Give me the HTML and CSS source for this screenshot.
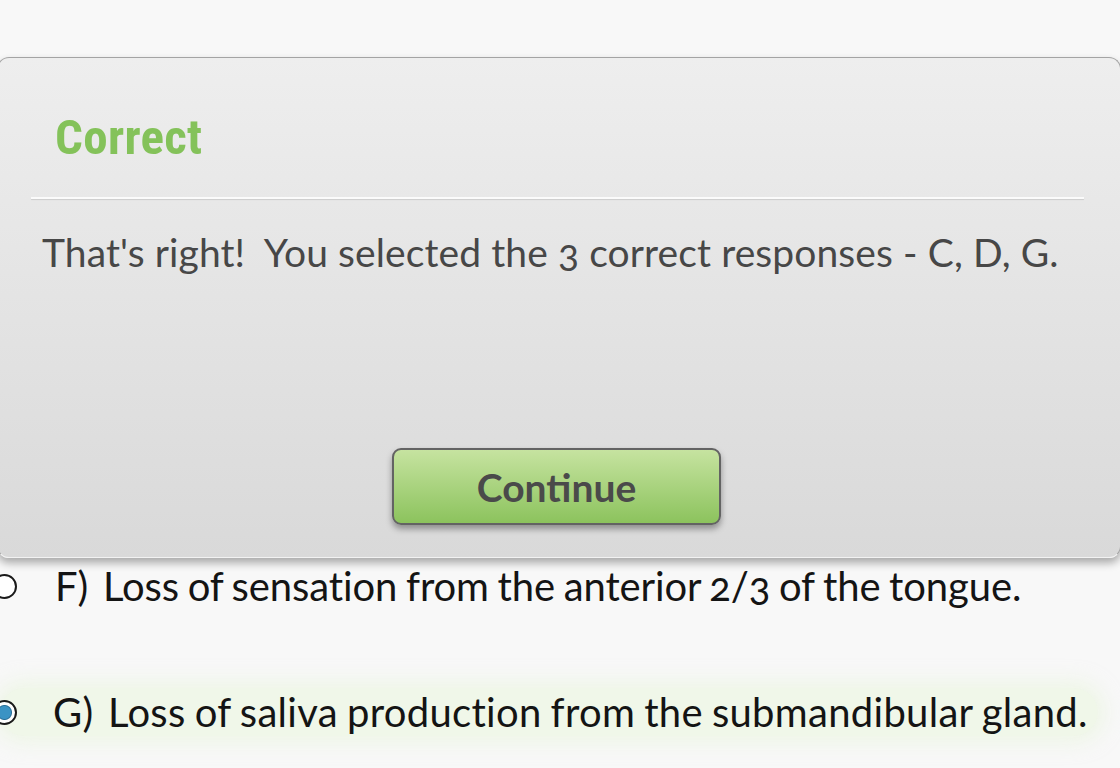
FILE: index.html
```html
<!DOCTYPE html>
<html>
<head>
<meta charset="utf-8">
<link rel="stylesheet" href="styles.css">
</head>
<body>
<div class="page">
  <div class="options">
    <div class="option">
      <span class="radio"></span>
      <span class="letter">F)</span>
      <span class="label">Loss of sensation from the anterior 2/3 of the tongue.</span>
    </div>
    <div class="option selected">
      <span class="radio checked"></span>
      <span class="letter">G)</span>
      <span class="label">Loss of saliva production from the submandibular gland.</span>
    </div>
  </div>

  <div class="dialog">
    <h1 class="title">Correct</h1>
    <div class="rule"></div>
    <p class="message">That's right!&nbsp; You selected the 3 correct responses - C, D, G.</p>
    <div class="actions">
      <button class="btn">Continue</button>
    </div>
  </div>
</div>
</body>
</html>
```

FILE: styles.css
```css
html, body {
  margin: 0;
  padding: 0;
}
body {
  width: 1120px;
  height: 768px;
  overflow: hidden;
  background: #f8f8f8;
  font-family: Lato, "Open Sans", sans-serif;
}
.page {
  position: relative;
  width: 1120px;
  height: 768px;
}

/* options list underneath */
.options {
  padding-top: 562px;
  display: flex;
  flex-direction: column;
  gap: 78px;
}
.option {
  display: flex;
  align-items: center;
  height: 48px;
  color: #141414;
  font-size: 40px;
  letter-spacing: -0.1px;
  word-spacing: -1.5px;
  font-variant-numeric: oldstyle-nums;
}
.option.selected {
  letter-spacing: 0.3px;
  background: rgba(232, 246, 218, 0.5);
  box-shadow: 0 0 18px 8px rgba(232, 246, 218, 0.5);
  border-radius: 24px;
  margin-right: 22px;
}
.radio {
  box-sizing: border-box;
  width: 25px;
  height: 25px;
  margin-left: -8px;
  border-radius: 50%;
  border: 2px solid #1a1a1a;
  background: #fff;
  flex: none;
}
.radio.checked {
  background: radial-gradient(circle, #3b93c4 0 6px, #2a6f98 7px, #ffffff 8px);
}
.letter {
  margin-left: 38px;
  width: 48px;
}
.option.selected .letter {
  margin-left: 36px;
  width: 55px;
}

/* dialog */
.dialog {
  position: absolute;
  left: -3px;
  top: 57px;
  width: 1124px;
  height: 501px;
  box-sizing: border-box;
  border: 1px solid #a4a4a4;
  border-bottom-color: #f2f2f2;
  border-radius: 12px;
  background: linear-gradient(#eeeeee, #d9d9d9);
  box-shadow: 0 5px 8px rgba(0, 0, 0, 0.32);
  padding: 0 36px 0 33px;
  display: flex;
  flex-direction: column;
}
.title {
  margin: 55px 0 0 24px;
  font-family: "Liberation Sans Narrow", "Roboto Condensed", Roboto, sans-serif;
  font-weight: bold;
  font-size: 49px;
  line-height: 49px;
  letter-spacing: 0.3px;
  color: #84c25a;
}
.rule {
  margin-top: 35px;
  height: 0;
  border-top: 2px solid #fbfbfb;
  box-shadow: 0 1px 1px rgba(0, 0, 0, 0.12);
}
.message {
  margin: 29px 0 0 11px;
  font-size: 39px;
  line-height: 48px;
  color: #474747;
  letter-spacing: 0.1px;
  font-variant-numeric: oldstyle-nums;
}
.actions {
  margin-top: auto;
  margin-bottom: 32px;
  display: flex;
  justify-content: center;
}
.btn {
  width: 329px;
  height: 77px;
  box-sizing: border-box;
  border: 2px solid #636363;
  border-radius: 9px;
  background: linear-gradient(#c6e3a0, #8cc35d);
  box-shadow: 0 4px 6px rgba(0, 0, 0, 0.35);
  font-family: Lato, "Open Sans", sans-serif;
  font-weight: bold;
  font-size: 39px;
  color: #4a4a4a;
  padding: 0;
  margin-left: -2px;
}
```
